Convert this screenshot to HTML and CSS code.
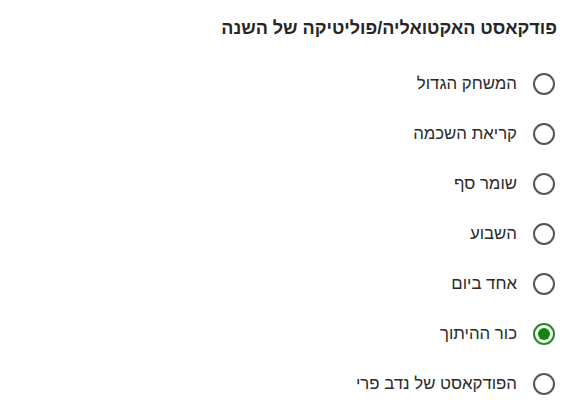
FILE: index.html
```html
<!DOCTYPE html>
<html lang="he" dir="rtl">
<head>
<meta charset="utf-8">
<link rel="stylesheet" href="styles.css">
</head>
<body>
<div class="poll">
  <h2 class="title">פודקאסט האקטואליה/פוליטיקה של השנה</h2>
  <ul class="options">
    <li class="option"><span class="radio"></span><span class="label">המשחק הגדול</span></li>
    <li class="option"><span class="radio"></span><span class="label">קריאת השכמה</span></li>
    <li class="option"><span class="radio"></span><span class="label">שומר סף</span></li>
    <li class="option"><span class="radio"></span><span class="label">השבוע</span></li>
    <li class="option"><span class="radio"></span><span class="label">אחד ביום</span></li>
    <li class="option"><span class="radio checked"></span><span class="label">כור ההיתוך</span></li>
    <li class="option"><span class="radio"></span><span class="label">הפודקאסט של נדב פרי</span></li>
  </ul>
</div>
</body>
</html>
```

FILE: styles.css
```css
html, body {
  margin: 0;
  padding: 0;
  background: #ffffff;
}
body {
  font-family: "Liberation Sans", Arial, sans-serif;
  color: #2b2b2b;
}
.poll {
  padding: 17px 21px 0 0;
}
.title {
  margin: 0;
  font-size: 18px;
  font-weight: bold;
  line-height: 22px;
  color: #262626;
}
.options {
  list-style: none;
  margin: 0;
  padding: 20px 2px 0 0;
}
.option {
  display: flex;
  align-items: center;
  height: 50px;
  gap: 16px;
}
.radio {
  box-sizing: border-box;
  width: 22px;
  height: 22px;
  border: 2px solid #555555;
  border-radius: 50%;
  flex: none;
  display: flex;
  align-items: center;
  justify-content: center;
}
.radio.checked {
  border-color: #1e8e1e;
}
.radio.checked::after {
  content: "";
  width: 12px;
  height: 12px;
  border-radius: 50%;
  background: #128512;
}
.label {
  font-size: 16.8px;
  line-height: 20px;
  color: #2b2b2b;
}
```
